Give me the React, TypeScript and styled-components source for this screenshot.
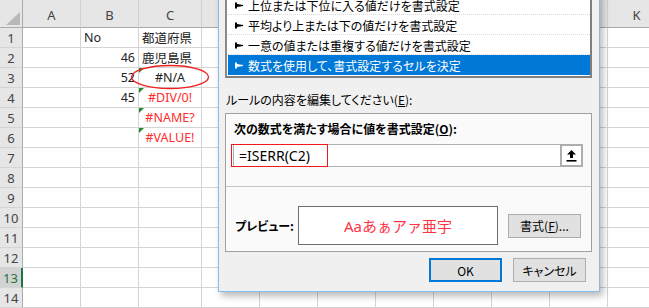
import React from "react";
import styled, { createGlobalStyle } from "styled-components";

type Tone = "normal" | "error";

type CellData = {
  text: string;
  align?: "left" | "right" | "center";
  tone?: Tone;
  flag?: boolean;
};

const COLS = ["A", "B", "C", "D", "E", "F", "G", "H", "I", "J", "K"];
const COL_WIDTHS = [58, 58, 63, 58, 58, 58, 58, 58, 58, 58, 58];
const ROW_COUNT = 14;
const SELECTED_ROW = 13;

const DATA: Record<number, Record<string, CellData>> = {
  1: { B: { text: "No" }, C: { text: "都道府県" } },
  2: { B: { text: "46", align: "right" }, C: { text: "鹿児島県" } },
  3: {
    B: { text: "52", align: "right" },
    C: { text: "#N/A", align: "center", flag: true },
  },
  4: {
    B: { text: "45", align: "right" },
    C: { text: "#DIV/0!", align: "center", tone: "error", flag: true },
  },
  5: { C: { text: "#NAME?", align: "center", tone: "error", flag: true } },
  6: { C: { text: "#VALUE!", align: "center", tone: "error", flag: true } },
};

const RULE_TYPES = [
  "上位または下位に入る値だけを書式設定",
  "平均より上または下の値だけを書式設定",
  "一意の値または重複する値だけを書式設定",
  "数式を使用して、書式設定するセルを決定",
];

function Bullet() {
  return (
    <svg width="8" height="7" viewBox="0 0 8 7">
      <rect x="0" y="0.5" width="2" height="6" fill="currentColor" />
      <polygon points="2,2 8,3 8,4 2,5" fill="currentColor" />
    </svg>
  );
}

function CollapseIcon() {
  return (
    <svg width="11" height="12" viewBox="0 0 11 12">
      <polygon points="5.5,0 10,4.5 7,4.5 7,8 4,8 4,4.5 1,4.5" fill="#000" />
      <rect x="0.5" y="10" width="10" height="1.6" fill="#000" />
    </svg>
  );
}

function App() {
  return (
    <>
      <GlobalStyle />
      <Stage>
        <Sheet>
          <Corner />
          {COLS.map((c) => (
            <ColHead key={c}>{c}</ColHead>
          ))}
          {Array.from({ length: ROW_COUNT }, (_, i) => i + 1).map((r) => (
            <React.Fragment key={r}>
              <RowHead selected={r === SELECTED_ROW}>{r}</RowHead>
              {COLS.map((c) => {
                const cell = DATA[r]?.[c];
                return (
                  <Cell
                    key={c}
                    align={cell?.align ?? "left"}
                    tone={cell?.tone ?? "normal"}
                    flag={!!cell?.flag}
                  >
                    {cell?.text}
                  </Cell>
                );
              })}
            </React.Fragment>
          ))}
        </Sheet>

        <Ellipse width="82" height="28" viewBox="0 0 82 28">
          <ellipse cx="41" cy="14" rx="38.5" ry="11.5" fill="none" stroke="#f02020" strokeWidth="1.3" />
        </Ellipse>

        <Dialog>
          <RuleList>
            {RULE_TYPES.map((t, i) => (
              <RuleItem key={t} active={i === RULE_TYPES.length - 1}>
                <Bullet />
                <span>{t}</span>
              </RuleItem>
            ))}
          </RuleList>

          <EditLabel>
            ルールの内容を編集してください(<u>E</u>):
          </EditLabel>

          <RuleBox>
            <FormulaPart>
              <BoxTitle>
                次の数式を満たす場合に値を書式設定(<u>O</u>):
              </BoxTitle>
              <FormulaInput>
                <FormulaText>=ISERR(C2)</FormulaText>
                <CollapseButton>
                  <CollapseIcon />
                </CollapseButton>
                <Highlight />
              </FormulaInput>
            </FormulaPart>
            <PreviewPart>
              <PreviewLabel>プレビュー:</PreviewLabel>
              <PreviewBox>Aaあぁアァ亜宇</PreviewBox>
              <DialogButton width={73}>
                書式(<u>F</u>)...
              </DialogButton>
            </PreviewPart>
          </RuleBox>

          <ButtonRow>
            <DialogButton width={73} primary>
              OK
            </DialogButton>
            <DialogButton width={73}>キャンセル</DialogButton>
          </ButtonRow>
        </Dialog>
      </Stage>
    </>
  );
}

export default App;

const GlobalStyle = createGlobalStyle`
  html, body {
    margin: 0;
    padding: 0;
  }
  body {
    background: #ffffff;
    font-family: "Noto Sans CJK JP", "Noto Sans", sans-serif;
    font-feature-settings: "palt";
    color: #000;
  }
  * {
    box-sizing: border-box;
  }
`;

const Stage = styled.div`
  position: relative;
  width: 649px;
  height: 308px;
  overflow: hidden;
  background: #fff;
`;

const Sheet = styled.div`
  display: grid;
  grid-template-columns: 23px ${COL_WIDTHS.map((w) => `${w}px`).join(" ")};
  grid-template-rows: 28px repeat(${ROW_COUNT}, 20px);
  width: max-content;
`;

const Corner = styled.div`
  position: relative;
  background: #e6e6e6;
  border-right: 1px solid #ababab;
  border-bottom: 1px solid #ababab;

  &::after {
    content: "";
    position: absolute;
    right: 2px;
    bottom: 2px;
    border-style: solid;
    border-width: 0 0 13px 14px;
    border-color: transparent transparent #b9b9b9 transparent;
  }
`;

const ColHead = styled.div`
  display: flex;
  align-items: flex-end;
  justify-content: center;
  padding-bottom: 3px;
  background: #e6e6e6;
  border-right: 1px solid #d0d0d0;
  border-bottom: 1px solid #ababab;
  color: #444;
  font-family: "Noto Sans", sans-serif;
  font-size: 13px;
`;

const RowHead = styled.div<{ selected: boolean }>`
  display: flex;
  align-items: center;
  justify-content: center;
  background: ${(p) => (p.selected ? "#d2d2d2" : "#e6e6e6")};
  border-right: ${(p) => (p.selected ? "2px solid #217346" : "1px solid #ababab")};
  border-bottom: 1px solid #d4d4d4;
  color: ${(p) => (p.selected ? "#217346" : "#444")};
  font-family: "Noto Sans", sans-serif;
  font-size: 13px;
`;

const Cell = styled.div<{ align: string; tone: Tone; flag: boolean }>`
  position: relative;
  display: flex;
  align-items: center;
  justify-content: ${(p) =>
    p.align === "right" ? "flex-end" : p.align === "center" ? "center" : "flex-start"};
  padding: 0 3px;
  border-right: 1px solid #d4d4d4;
  border-bottom: 1px solid #d4d4d4;
  color: ${(p) => (p.tone === "error" ? "#ff2a2a" : "#222")};
  font-family: "Noto Sans", "Noto Sans CJK JP", sans-serif;
  font-size: 12.5px;
  white-space: nowrap;

  ${(p) =>
    p.flag &&
    `
    &::before {
      content: "";
      position: absolute;
      left: 0;
      top: 0;
      border-style: solid;
      border-width: 5px 5px 0 0;
      border-color: #1e8c2a transparent transparent transparent;
    }
  `}
`;

const Ellipse = styled.svg`
  position: absolute;
  left: 129px;
  top: 63px;
`;

const Dialog = styled.div`
  position: absolute;
  left: 218px;
  bottom: 16px;
  width: 382px;
  display: flex;
  flex-direction: column;
  padding: 0 7px 9px 6px;
  background: #f0f0f0;
  border: 1px solid #86bce8;
  box-shadow: 3px 4px 7px rgba(0, 0, 0, 0.28);
  font-size: 12px;
`;

const RuleList = styled.div`
  display: flex;
  flex-direction: column;
  padding: 1px 0 1px 1px;
  background: #fff;
  border: 2px solid #7f7f7f;
  border-top-color: #a0a0a0;
  border-left-color: #8a8a8a;
`;

const RuleItem = styled.div<{ active: boolean }>`
  display: flex;
  align-items: center;
  gap: 5px;
  height: 20px;
  padding: 2px 0 0 7px;
  white-space: nowrap;
  overflow: hidden;
  background: ${(p) => (p.active ? "#0078d7" : "transparent")};
  color: ${(p) => (p.active ? "#fff" : "#000")};
  border-bottom: 1px dotted ${(p) => (p.active ? "#0078d7" : "#d8d8d8")};
`;

const EditLabel = styled.div`
  padding: 14px 0 5px 1px;
  line-height: 16px;
`;

const RuleBox = styled.div`
  display: flex;
  flex-direction: column;
  background: #fafafa;
  border: 1px solid #a0a0a0;
`;

const FormulaPart = styled.div`
  display: flex;
  flex-direction: column;
  gap: 7px;
  padding: 7px 8px 19px 7px;
  border-bottom: 1px solid #c4c4c4;
`;

const BoxTitle = styled.div`
  padding-left: 1px;
  line-height: 16px;
  font-weight: bold;
`;

const FormulaInput = styled.div`
  position: relative;
  display: flex;
  align-items: stretch;
  height: 23px;
  background: #fff;
  border: 1px solid #b0b0b0;
  border-right: none;
`;

const FormulaText = styled.div`
  flex: 1;
  display: flex;
  align-items: center;
  padding-left: 5px;
  font-family: "Noto Sans", sans-serif;
  font-size: 14px;
`;

const CollapseButton = styled.div`
  width: 23px;
  margin-top: -1px;
  margin-bottom: -1px;
  display: flex;
  align-items: center;
  justify-content: center;
  background: #fff;
  border: 2px solid #adadad;
`;

const Highlight = styled.span`
  position: absolute;
  left: -3px;
  top: -1px;
  width: 97px;
  height: 23px;
  border: 1.5px solid #f01818;
  pointer-events: none;
`;

const PreviewPart = styled.div`
  display: flex;
  align-items: center;
  padding: 19px 8px 6px 9px;
`;

const PreviewLabel = styled.div`
  width: 63px;
  font-weight: bold;
`;

const PreviewBox = styled.div`
  width: 200px;
  height: 39px;
  display: flex;
  align-items: center;
  justify-content: center;
  background: #fff;
  border: 1px solid #6d6d6d;
  color: #ff3344;
  font-family: "Noto Sans", "Noto Sans CJK JP", sans-serif;
  font-size: 15px;
  font-feature-settings: normal;
`;

const DialogButton = styled.div<{ width: number; primary?: boolean }>`
  width: ${(p) => p.width}px;
  height: 24px;
  margin-left: 10px;
  display: flex;
  align-items: center;
  justify-content: center;
  background: #e1e1e1;
  border: ${(p) => (p.primary ? "2px solid #0078d7" : "1px solid #adadad")};
  font-size: 12px;
`;

const ButtonRow = styled.div`
  display: flex;
  justify-content: flex-end;
  gap: 1px;
  margin-top: 6px;
  padding-right: 6px;
`;
